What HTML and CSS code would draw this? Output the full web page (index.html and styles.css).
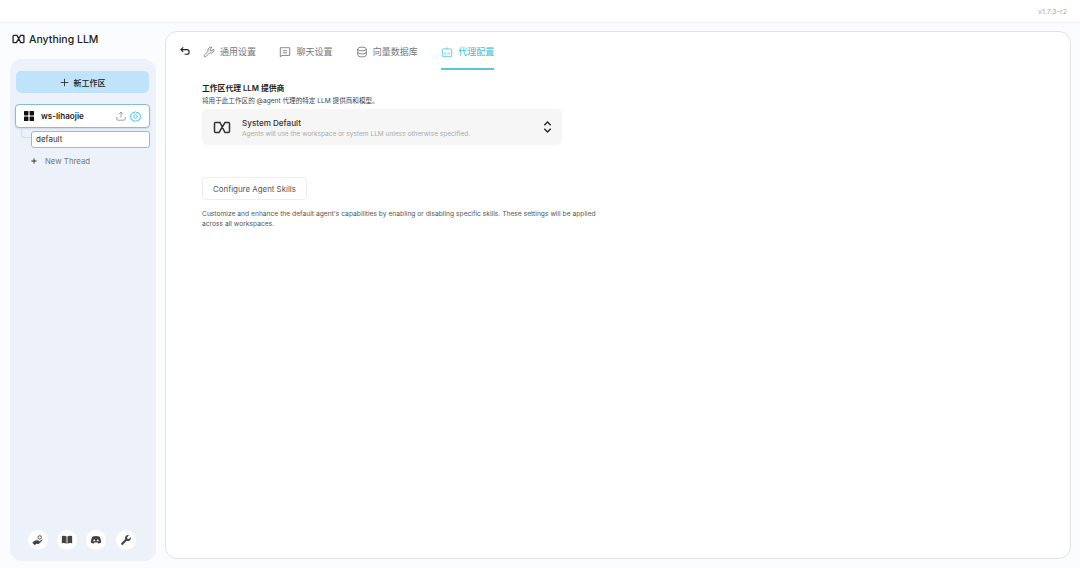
FILE: index.html
```html
<!DOCTYPE html>
<html lang="zh">
<head>
<meta charset="utf-8">
<title>AnythingLLM</title>
<link rel="stylesheet" href="styles.css">
</head>
<body>
<div class="app">
  <header class="topbar"><span class="version">v1.7.3-r2</span></header>
  <div class="shell">
    <aside class="side">
      <div class="brand">
        <svg class="brand-logo" viewBox="0 0 18 13" fill="none" stroke="#222" stroke-width="1.800"><path d="M7 1.500H2.500a1 1 0 0 0-1 1v8a1 1 0 0 0 1 1H6L12 1.500h3.500a1 1 0 0 1 1 1v8a1 1 0 0 1-1 1H12L7 1.500z"/></svg>
        <span>Anything LLM</span>
      </div>
      <div class="panel">
        <button class="new-ws"><svg class="plus" viewBox="0 0 12 12" stroke="#222" stroke-width="1.100"><path d="M6 1v10M1 6h10"/></svg><span>新工作区</span></button>
        <div class="ws">
          <svg class="ws-grid" viewBox="0 0 10 10" fill="#111"><rect width="4.400" height="4.400" rx=".6"/><rect x="5.600" width="4.400" height="4.400" rx=".6"/><rect y="5.600" width="4.400" height="4.400" rx=".6"/><rect x="5.600" y="5.600" width="4.400" height="4.400" rx=".6"/></svg>
          <span class="ws-name">ws-lihaojie</span>
          <svg class="ws-icon" viewBox="0 0 12 12" fill="none" stroke="#777" stroke-width=".8"><path d="M6 8V1.500M3.800 3.500 6 1.200l2.200 2.300M1 7v3a1 1 0 0 0 1 1h8a1 1 0 0 0 1-1V7"/></svg>
          <svg class="ws-icon" viewBox="0 0 12 12" fill="none" stroke="#38bdf8" stroke-width="1"><path d="M6 .8l1.300 1 1.600-.2.700 1.500 1.500.7-.2 1.600 1 .6-1 1 .2 1.600-1.500.7-.7 1.500-1.600-.2-1.300 1-1.300-1-1.600.2-.7-1.500-1.500-.7.2-1.600-1-1 1-.6-.2-1.600 1.500-.7.700-1.500 1.600.2z"/><circle cx="6" cy="6" r="1.900"/></svg>
        </div>
        <div class="thread-row">
          <span class="elbow"></span>
          <div class="thread">default</div>
        </div>
        <div class="new-thread"><svg class="plus-sm" viewBox="0 0 8 8" stroke="#222" stroke-width="1.200"><path d="M4 .5v7M.5 4h7"/></svg><span>New Thread</span></div>
        <div class="foot">
          <span class="round"><svg viewBox="0 0 14 14" fill="none" stroke="#444" stroke-width="1.100"><path d="M1 10l3-2h3l2 1 3-2-4 4H5l-2 1.500z" fill="#444"/><circle cx="9" cy="4" r="2"/></svg></span>
          <span class="round"><svg viewBox="0 0 14 14" fill="#444"><path d="M1 2.500c2-.7 4-.5 5.500.5v8.500c-1.500-1-3.500-1.200-5.500-.5zM13 2.500c-2-.7-4-.5-5.500.5v8.500c1.500-1 3.500-1.200 5.500-.5z"/></svg></span>
          <span class="round"><svg viewBox="0 0 14 14" fill="#444"><path d="M3 3c2.500-1 5.500-1 8 0 1.300 2 2 4.500 2 7l-3 1.500-1-1.500H5l-1 1.500L1 10c0-2.500.7-5 2-7z"/><circle cx="5" cy="7.500" r="1.100" fill="#fff"/><circle cx="9" cy="7.500" r="1.100" fill="#fff"/></svg></span>
          <span class="round"><svg viewBox="0 0 14 14" fill="#444"><path d="M12.500 3.500 10.300 5.700 8.500 5.500 8.300 3.700 10.500 1.500a3.600 3.600 0 0 0-4.500 4.700L1.500 10.700a1.300 1.300 0 0 0 1.800 1.800l4.500-4.500a3.600 3.600 0 0 0 4.700-4.500z"/></svg></span>
        </div>
      </div>
    </aside>
    <main class="main">
      <nav class="tabs">
        <svg class="back" viewBox="0 0 12 10" fill="none" stroke="#222" stroke-width="1.200"><path d="M3.500 1 1 3.500 3.500 6M1 3.500h6.500a2.500 2.500 0 0 1 0 5H5"/></svg>
        <a class="tab"><svg viewBox="0 0 14 14" fill="none" stroke="#666" stroke-width=".9"><path d="M12.500 3.500 10.300 5.700 8.500 5.500 8.300 3.700 10.500 1.500a3.600 3.600 0 0 0-4.500 4.700L1.500 10.700a1.300 1.300 0 0 0 1.800 1.800l4.500-4.500a3.600 3.600 0 0 0 4.700-4.500z"/></svg><span>通用设置</span></a>
        <a class="tab"><svg viewBox="0 0 14 14" fill="none" stroke="#666" stroke-width=".9"><path d="M1.500 2h11v9h-9l-2 1.500zM4.500 5.500h5M4.500 8h5"/></svg><span>聊天设置</span></a>
        <a class="tab"><svg viewBox="0 0 14 14" fill="none" stroke="#666" stroke-width=".9"><ellipse cx="7" cy="3.500" rx="5" ry="2.200"/><path d="M2 3.500v7c0 1.200 2.200 2.200 5 2.200s5-1 5-2.200v-7M2 7c0 1.200 2.200 2.200 5 2.200s5-1 5-2.200"/></svg><span>向量数据库</span></a>
        <a class="tab active"><svg viewBox="0 0 14 14" fill="none" stroke="#38bdd8" stroke-width=".9"><rect x="1.500" y="3.500" width="11" height="9" rx="1"/><path d="M7 3.500V1.500M4.500 7v3M7 8.500V10M9.500 7.500V10"/></svg><span>代理配置</span></a>
      </nav>
      <section class="content">
        <h2 class="title">工作区代理 LLM 提供商</h2>
        <p class="sub">将用于此工作区的 @agent 代理的特定 LLM 提供商和模型。</p>
        <div class="select">
          <svg class="sel-logo" viewBox="0 0 18 13" fill="none" stroke="#333" stroke-width="1.500"><path d="M7 1.500H2.500a1 1 0 0 0-1 1v8a1 1 0 0 0 1 1H6L12 1.500h3.500a1 1 0 0 1 1 1v8a1 1 0 0 1-1 1H12L7 1.500z"/></svg>
          <div class="sel-text">
            <div class="sel-name">System Default</div>
            <div class="sel-desc">Agents will use the workspace or system LLM unless otherwise specified.</div>
          </div>
          <svg class="chev" viewBox="0 0 10 14" fill="none" stroke="#222" stroke-width="1.500"><path d="M1.500 5 5 1.500 8.500 5M1.500 9 5 12.500 8.500 9"/></svg>
        </div>
        <button class="skills">Configure Agent Skills</button>
        <p class="note">Customize and enhance the default agent's capabilities by enabling or disabling specific skills. These settings will be applied across all workspaces.</p>
      </section>
    </main>
  </div>
</div>
</body>
</html>
```
FILE: styles.css
```css
* { box-sizing: border-box; }
html, body { margin: 0; height: 100%; }
body {
  background: #fbfcfe;
  color: #222;
  font-family: "Inter", "Noto Sans CJK SC", sans-serif;
  overflow: hidden;
}
.app { display: flex; flex-direction: column; height: 568px; }
.topbar {
  height: 23px;
  flex: none;
  background: #fff;
  border-bottom: 1px solid #eef0f3;
  display: flex;
  justify-content: flex-end;
  align-items: center;
  padding: 0 13px 0 0;
}
.version { font-size: 6.800px; color: #a8a8a8; letter-spacing: .2px; }
.shell { flex: 1; display: flex; gap: 9px; padding: 8px 9px 9px 10px; min-height: 0; }
.side { width: 146px; flex: none; display: flex; flex-direction: column; }
.brand {
  height: 16px;
  margin-bottom: 12px;
  flex: none;
  display: flex;
  align-items: center;
  gap: 4px;
  padding-left: 2px;
  font-size: 10.500px;
  font-weight: 500;
  color: #222;
}
.brand-logo { width: 13px; height: 10px; }
.panel {
  flex: 1;
  background: #edf2fa;
  border-radius: 12px;
  padding: 12px 6px 11px 5px;
  display: flex;
  flex-direction: column;
  margin-bottom: -2px;
}
.new-ws {
  height: 22px;
  margin: 0 1px;
  background: #bfe3fb;
  border: 0;
  border-radius: 5px;
  display: flex;
  align-items: center;
  justify-content: center;
  gap: 5px;
  font: 500 8px "Inter", "Noto Sans CJK SC", sans-serif;
  color: #222;
  padding: 0;
  flex: none;
}
.plus { width: 9px; height: 9px; }
.ws {
  margin-top: 11px;
  height: 24px;
  background: #fff;
  border: 1px solid #86bcd9;
  border-radius: 4px;
  display: flex;
  align-items: center;
  padding: 0 8px;
  box-shadow: 0 1px 2px rgba(80,120,160,.2);
  flex: none;
}
.ws-grid { width: 10px; height: 10px; margin-right: 7px; }
.ws-name { font-size: 8.100px; font-weight: 600; flex: 1; color: #222; }
.ws-icon { width: 10px; height: 10px; margin-left: 4px; }
.ws-icon:last-child { width: 11px; height: 11px; }
.thread-row { display: flex; margin-top: 3px; flex: none; }
.elbow {
  width: 10px;
  height: 10px;
  margin-top: -3px;
  margin-left: 6px;
  border-left: 1px solid #d5dbe3;
  border-bottom: 1px solid #d5dbe3;
  border-bottom-left-radius: 4px;
}
.thread {
  flex: 1;
  height: 17px;
  background: #fff;
  border: 1px solid #8fbcd8;
  border-radius: 3px;
  font-size: 8px;
  line-height: 15px;
  padding-left: 4px;
  color: #333;
}
.new-thread {
  margin-top: 7px;
  display: flex;
  align-items: center;
  gap: 8px;
  padding-left: 16px;
  font-size: 7.800px;
  color: #777;
  height: 12px;
  flex: none;
}
.plus-sm { width: 6px; height: 6px; }
.foot { margin-top: auto; display: flex; gap: 9.200px; padding-left: 13px; }
.round {
  width: 20px;
  height: 20px;
  border-radius: 50%;
  background: #fff;
  display: flex;
  align-items: center;
  justify-content: center;
}
.round svg { width: 12px; height: 12px; }
.main {
  flex: 1;
  background: #fff;
  border: 1px solid #dfe3e8;
  border-radius: 12px;
  min-width: 0;
}
.tabs {
  height: 38px;
  display: flex;
  align-items: flex-start;
  padding-left: 14px;
  gap: 23.400px;
}
.back { width: 11px; height: 10px; margin-top: 14px; margin-right: -11.400px; }
.tab {
  height: 38px;
  display: flex;
  align-items: center;
  gap: 5px;
  font-size: 9px;
  color: #777;
  padding-top: 3px;
  border-bottom: 2px solid transparent;
}
.tab svg { width: 12px; height: 12px; }
.tab.active { color: #38bdd8; border-bottom-color: #5cc6d8; }
.content { padding: 11px 0 0 36px; }
.title { margin: 0; font-size: 7.800px; line-height: 14px; font-weight: 600; color: #222; }
.sub { margin: 1px 0 0; font-size: 6.600px; line-height: 10px; color: #444; }
.select {
  margin-top: 3px;
  width: 360px;
  height: 36px;
  background: #f6f6f7;
  border-radius: 5px;
  display: flex;
  align-items: center;
  padding: 0 10px 0 11px;
}
.sel-logo { width: 18px; height: 13px; margin-right: 11px; }
.sel-text { flex: 1; padding-top: 2px; }
.sel-name { font-size: 8.100px; line-height: 12px; font-weight: 500; color: #333; }
.sel-desc { font-size: 6.550px; line-height: 11px; color: #aaa; }
.chev { width: 9px; height: 14px; }
.skills {
  display: block;
  margin-top: 32px;
  width: 105px;
  height: 23px;
  background: #fff;
  border: 1px solid #eee;
  border-radius: 4px;
  font: 400 7.900px "Inter", sans-serif;
  color: #555;
  padding: 0;
}
.note { margin: 10px 0 0; width: 400px; font-size: 6.700px; line-height: 9.500px; color: #555; }
```
